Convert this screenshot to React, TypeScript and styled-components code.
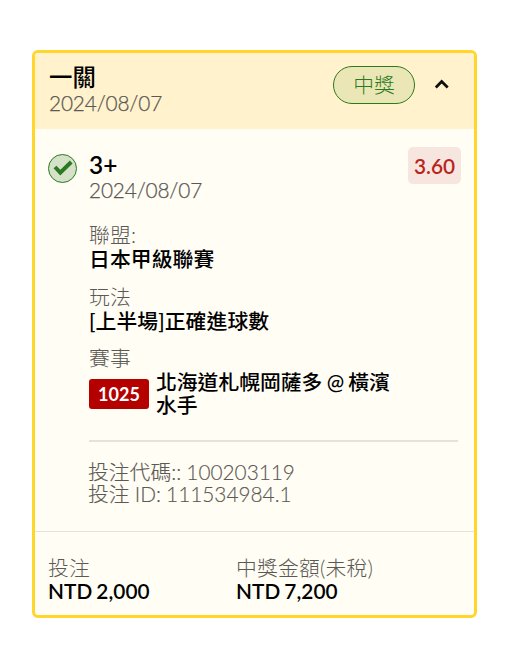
import React from 'react';
import styled, { createGlobalStyle } from 'styled-components';

const GlobalStyle = createGlobalStyle`
  * { box-sizing: border-box; }
  body {
    margin: 0;
    background: #fff;
    color: #000;
    font-family: Lato, "Noto Sans CJK TC", sans-serif;
    font-size: 20.8px;
  }
`;

const Page = styled.main`
  padding: 50px 30px 31px 32px;
`;

const Card = styled.article`
  width: 445px;
  height: 568px;
  display: flex;
  flex-direction: column;
  border: 3px solid #ffd629;
  border-radius: 6px;
  background: #fffdf4;
  overflow: hidden;
`;

const Header = styled.header`
  height: 76px;
  flex: none;
  display: flex;
  align-items: flex-start;
  padding: 11px 24px 0 14px;
  background: #fff2cc;
`;

const Grow = styled.div`
  flex: 1;
`;

const Title = styled.div`
  font-size: 23.4px;
  line-height: 27px;
  height: 27px;
  font-weight: 500;
`;

const Pick = styled.div`
  height: 27px;
  font-size: 24.5px;
  font-weight: 600;
  line-height: 27px;
`;

const Muted = styled.div`
  height: 24px;
  line-height: 24px;
  font-weight: 300;
  letter-spacing: 0.2px;
  color: #5b5955;
  white-space: nowrap;
`;

const DateText = styled(Muted)`
  letter-spacing: -0.15px;
  -webkit-text-stroke: 0.25px #5b5955;
`;

const Strong = styled.div`
  height: 24px;
  line-height: 24px;
  font-weight: 500;
  letter-spacing: 0.1px;
  white-space: nowrap;
`;

const Amount = styled(Strong)`
  line-height: 22px;
  font-weight: 600;
  word-spacing: -1.5px;
`;

const StatusPill = styled.span`
  width: 82px;
  height: 38px;
  margin: 2px 19px 0 0;
  border: 1px solid #2b7a1f;
  border-radius: 19px;
  background: #ebe6b6;
  color: #2b7a1f;
  font-weight: 300;
  line-height: 36px;
  text-align: center;
`;

const Chevron = styled.svg`
  width: 16px;
  height: 12px;
  margin-top: 14px;
`;

const Selection = styled.section`
  height: 402px;
  flex: none;
  display: flex;
  align-items: flex-start;
  padding: 24px 13px 0 13px;
`;

const CheckIcon = styled.svg`
  width: 29px;
  height: 29px;
  flex: none;
  margin: 1px 12px 0 0;
`;

const Details = styled.div`
  flex: 1;
  min-width: 0;
  margin-top: -1px;
`;

const TopRow = styled.div`
  display: flex;
  justify-content: space-between;
  height: 71px;
`;

const Selected = styled.div`
  margin-top: -1px;
`;

const Odds = styled.span`
  width: 53px;
  height: 37px;
  margin-top: -5px;
  border-radius: 5px;
  background: #f7e6df;
  color: #b9251c;
  font-weight: 600;
  line-height: 38px;
  text-align: center;
`;

const Field = styled.div`
  height: 62px;

  &:nth-of-type(3) {
    height: 61px;
  }
`;

const Match = styled.div`
  display: flex;
  align-items: center;
  gap: 7px;
  height: 46px;
`;

const MatchCode = styled.span`
  width: 60px;
  height: 30px;
  flex: none;
  margin-top: 2px;
  border-radius: 3px;
  background: #b50000;
  color: #fff;
  font-size: 18px;
  font-weight: 700;
  line-height: 31px;
  text-align: center;
`;

const Teams = styled.span`
  width: 240px;
  font-weight: 500;
  line-height: 23px;
  word-spacing: -1px;
`;

const Divider = styled.hr`
  width: 369px;
  height: 2px;
  margin: 24px 0 19px;
  border: 0;
  background: #e5e2db;
`;

const References = styled.div`
  display: grid;
  grid-auto-rows: 22px;
  margin-left: -1px;
  color: #5b5955;
  font-weight: 300;
  line-height: 22px;
  word-spacing: -0.5px;
  white-space: nowrap;
  -webkit-text-stroke: 0.15px #5b5955;
`;

const Footer = styled.footer`
  flex: 1;
  display: grid;
  grid-template-columns: 188px 1fr;
  padding: 24px 14px 0 13px;
  border-top: 1px solid #e5e2db;
`;

export default function App() {
  return (
    <Page>
      <GlobalStyle />
      <Card>
        <Header>
          <Grow>
            <Title>一關</Title>
            <DateText>2024/08/07</DateText>
          </Grow>
          <StatusPill>中獎</StatusPill>
          <Chevron viewBox="0 0 16 12" fill="none" stroke="#111" strokeWidth="2.8">
            <path d="M1.8 9.5 7.7 3.5l6 6" />
          </Chevron>
        </Header>
        <Selection>
          <CheckIcon viewBox="0 0 29 29">
            <circle cx="14.5" cy="14.5" r="14" fill="#d5e1c8" stroke="#2b7a1f" />
            <path d="M7 13l5.3 5.6L23.2 8" fill="none" stroke="#2b7a1f" strokeWidth="4" />
          </CheckIcon>
          <Details>
            <TopRow>
              <Selected>
                <Pick>3+</Pick>
                <DateText>2024/08/07</DateText>
              </Selected>
              <Odds>3.60</Odds>
            </TopRow>
            <Field>
              <Muted>聯盟:</Muted>
              <Strong>日本甲級聯賽</Strong>
            </Field>
            <Field>
              <Muted>玩法</Muted>
              <Strong>[上半場]正確進球數</Strong>
            </Field>
            <Muted>賽事</Muted>
            <Match>
              <MatchCode>1025</MatchCode>
              <Teams>北海道札幌岡薩多 @ 橫濱水手</Teams>
            </Match>
            <Divider />
            <References>
              <span>投注代碼:: 100203119</span>
              <span>投注 ID: 111534984.1</span>
            </References>
          </Details>
        </Selection>
        <Footer>
          <div>
            <Muted>投注</Muted>
            <Amount>NTD 2,000</Amount>
          </div>
          <div>
            <Muted>中獎金額(未稅)</Muted>
            <Amount>NTD 7,200</Amount>
          </div>
        </Footer>
      </Card>
    </Page>
  );
}
